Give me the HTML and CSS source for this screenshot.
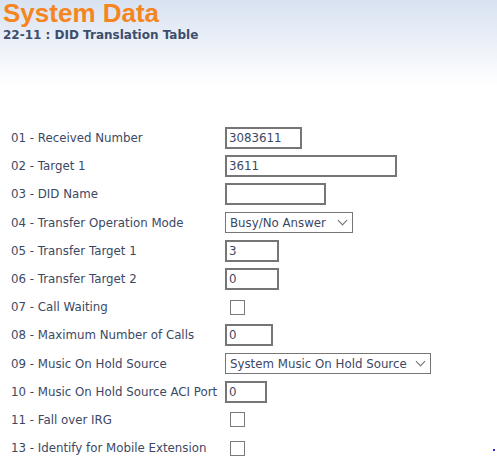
FILE: index.html
```html
<!DOCTYPE html>
<html lang="en">
<head>
    <meta charset="UTF-8">
    <meta name="viewport" content="width=device-width, initial-scale=1.0">
    <title>System Data</title>
    <link rel="stylesheet" href="styles.css">
</head>
<body>

    <div class="header">
        <h1>System Data</h1>
        <h2>22-11 : DID Translation Table</h2>
    </div>

    <form class="settings">
        <div class="row">
            <label>01 - Received Number</label>
            <input type="text" class="w-77" value="3083611">
        </div>
        <div class="row">
            <label>02 - Target 1</label>
            <input type="text" class="w-172" value="3611">
        </div>
        <div class="row">
            <label>03 - DID Name</label>
            <input type="text" class="w-101" value="">
        </div>
        <div class="row">
            <label>04 - Transfer Operation Mode</label>
            <div class="select w-128">Busy/No Answer <span class="chev"></span></div>
        </div>
        <div class="row">
            <label>05 - Transfer Target 1</label>
            <input type="text" class="w-54" value="3">
        </div>
        <div class="row">
            <label>06 - Transfer Target 2</label>
            <input type="text" class="w-54" value="0">
        </div>
        <div class="row">
            <label>07 - Call Waiting</label>
            <span class="check"></span>
        </div>
        <div class="row">
            <label>08 - Maximum Number of Calls</label>
            <input type="text" class="w-48" value="0">
        </div>
        <div class="row">
            <label>09 - Music On Hold Source</label>
            <div class="select w-206">System Music On Hold Source <span class="chev"></span></div>
        </div>
        <div class="row">
            <label>10 - Music On Hold Source ACI Port</label>
            <input type="text" class="w-42" value="0">
        </div>
        <div class="row">
            <label>11 - Fall over IRG</label>
            <span class="check"></span>
        </div>
        <div class="row">
            <label>13 - Identify for Mobile Extension</label>
            <span class="check"></span>
            <span class="dot"></span>
        </div>
    </form>

</body>
</html>
```

FILE: styles.css
```css
html, body {
    margin: 0;
    padding: 0;
    background: #fff;
}

body {
    font-family: 'DejaVu Sans', Tahoma, sans-serif;
    font-size: 11.8px;
    color: #3b4863;
    overflow: hidden;
}

.header {
    height: 86px;
    padding: 0 3px;
    background: linear-gradient(to bottom, #d8e2f1, #ffffff);
}

.header h1 {
    margin: 0;
    padding-top: 1px;
    font-family: 'Liberation Sans', Arial, sans-serif;
    font-size: 26px;
    line-height: 24px;
    font-weight: bold;
    color: #f5851f;
}

.header h2 {
    margin: 3px 0 0;
    font-family: 'DejaVu Sans', Tahoma, sans-serif;
    font-size: 12px;
    font-weight: bold;
    color: #3d4d6c;
}

.settings {
    margin-top: 38px;
    padding-left: 11px;
}

.row {
    display: flex;
    align-items: center;
    height: 28.2px;
    position: relative;
}

.row label {
    width: 214px;
    flex: none;
    white-space: nowrap;
}

.row input[type="text"] {
    box-sizing: border-box;
    height: 22px;
    margin: 0;
    padding: 0 2px;
    border: 2px solid #767676;
    font-family: 'DejaVu Sans', Tahoma, sans-serif;
    font-size: 11.8px;
    color: #3b4863;
    background: #fff;
    outline: none;
}

.select {
    box-sizing: border-box;
    height: 21px;
    display: flex;
    align-items: center;
    justify-content: space-between;
    padding: 0 6px 0 4px;
    border: 1px solid #767676;
    font-size: 11.8px;
    color: #3b4863;
    background: #fff;
    white-space: nowrap;
}

.chev {
    width: 6px;
    height: 6px;
    border-right: 1px solid #6b6b6b;
    border-bottom: 1px solid #6b6b6b;
    transform: rotate(45deg);
    margin: -4px 0 0 8px;
}

.check {
    box-sizing: border-box;
    width: 15px;
    height: 15px;
    margin-left: 5px;
    border: 1px solid #7a7a7a;
    background: #fff;
}

.dot {
    position: absolute;
    left: 482px;
    top: 15px;
    width: 2px;
    height: 2px;
    background: #2b2bd0;
}

.w-42 { width: 42px; }
.w-48 { width: 48px; }
.w-54 { width: 54px; }
.w-77 { width: 77px; }
.w-101 { width: 101px; }
.w-128 { width: 128px; }
.w-172 { width: 172px; }
.w-206 { width: 206px; }
```
